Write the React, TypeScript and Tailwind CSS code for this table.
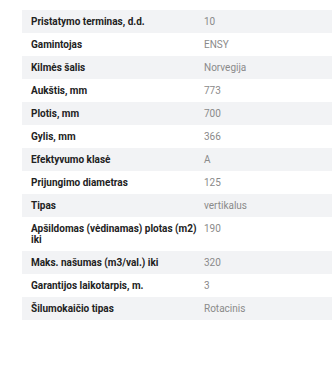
const specs: [string, string][] = [
  ['Pristatymo terminas, d.d.', '10'],
  ['Gamintojas', 'ENSY'],
  ['Kilmės šalis', 'Norvegija'],
  ['Aukštis, mm', '773'],
  ['Plotis, mm', '700'],
  ['Gylis, mm', '366'],
  ['Efektyvumo klasė', 'A'],
  ['Prijungimo diametras', '125'],
  ['Tipas', 'vertikalus'],
  ['Apšildomas (vėdinamas) plotas (m2) iki', '190'],
  ['Maks. našumas (m3/val.) iki', '320'],
  ['Garantijos laikotarpis, m.', '3'],
  ['Šilumokaičio tipas', 'Rotacinis'],
];

export default function App() {
  return (
    <div className="w-[333px] h-[368px] bg-white pt-[10px] pl-[22px] pr-[1px] font-['Roboto',sans-serif]">
      <div className="flex flex-col">
        {specs.map(([label, value], i) => (
          <div key={label} className={`flex ${i % 2 === 0 ? 'bg-[#f2f3f5]' : 'bg-white'}`}>
            <div className="w-[182px] shrink-0 pl-[9px] pr-[2px] py-[6px] text-[10px] leading-[11px] font-bold text-[#222]">
              {label}
            </div>
            <div className="py-[6px] text-[10px] leading-[11px] text-[#8a8a8a]">{value}</div>
          </div>
        ))}
      </div>
    </div>
  );
}
